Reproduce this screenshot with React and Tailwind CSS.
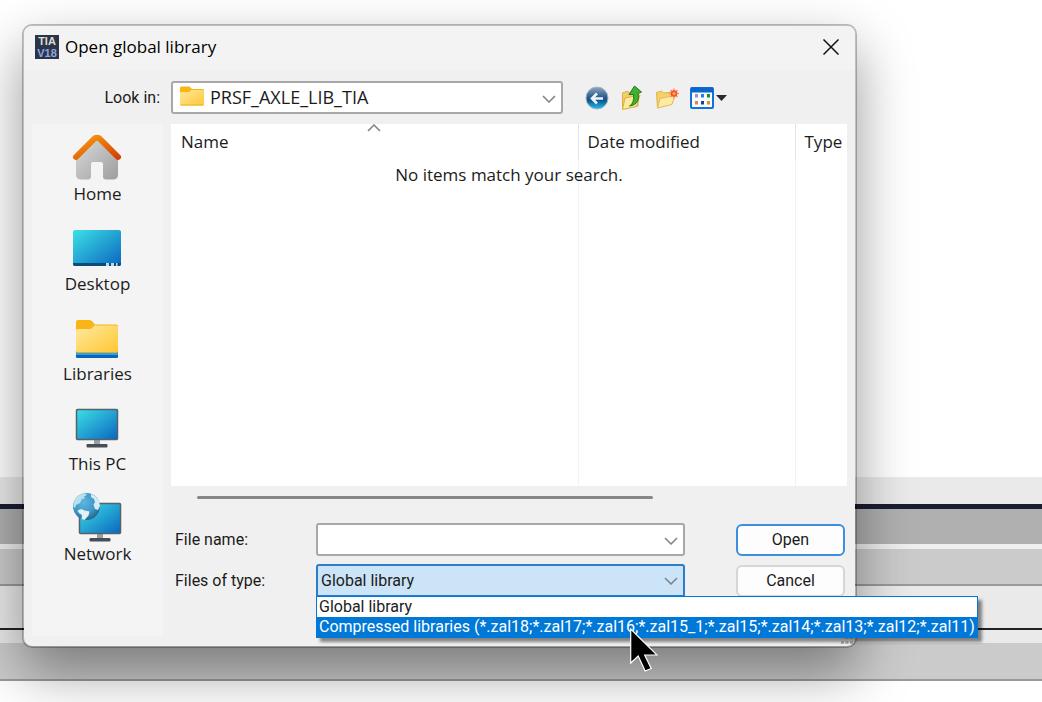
import { useState } from 'react';

const FILE_TYPES = [
    'Global library',
    'Compressed libraries (*.zal18;*.zal17;*.zal16;*.zal15_1;*.zal15;*.zal14;*.zal13;*.zal12;*.zal11)',
];

function Chevron({ className }) {
    return (
        <svg viewBox="0 0 14 8" fill="none" stroke="#808080" strokeWidth="1.500" className={className} aria-hidden="true">
            <path d="M1 1l6 6 6-6" />
        </svg>
    );
}

function FolderIcon({ className }) {
    return (
        <svg viewBox="0 0 24 20" className={className} aria-hidden="true">
            <defs>
                <linearGradient id="folder" x1="0" y1="0" x2="1" y2="1">
                    <stop offset="0" stopColor="#ffe79c" />
                    <stop offset="1" stopColor="#ffc937" />
                </linearGradient>
            </defs>
            <path d="M0 2a1.500 1.500 0 0 1 1.500-1.500H9.500L12 3h10.500A1.500 1.500 0 0 1 24 4.500V12H0z" fill="#f8b514" />
            <path d="M0 7.500A1.500 1.500 0 0 1 1.500 6H9l2.500-2h11A1.500 1.500 0 0 1 24 5.500V18a1.500 1.500 0 0 1-1.500 1.500h-21A1.500 1.500 0 0 1 0 18z" fill="url(#folder)" />
            <path d="M.5 19h23" stroke="#e9ae22" />
        </svg>
    );
}

function HomeIcon() {
    return (
        <svg viewBox="1 -2 50 48" className="h-12 w-[50px] overflow-visible" aria-hidden="true">
            <defs>
                <linearGradient id="wall" x1="0" y1="0" x2="1" y2="1">
                    <stop offset="0" stopColor="#dcdcdc" />
                    <stop offset="1" stopColor="#9d9d9d" />
                </linearGradient>
                <linearGradient id="roof" x1="0" y1="0" x2="1" y2="1">
                    <stop offset="0" stopColor="#fb9d0e" />
                    <stop offset="1" stopColor="#d34204" />
                </linearGradient>
            </defs>
            <path d="M4 24L25 5l21 19v18a4.500 4.500 0 0 1-4.500 4.500H34a3 3 0 0 1-3-3V31a2 2 0 0 0-2-2h-8a2 2 0 0 0-2 2v12.500a3 3 0 0 1-3 3H8.500A4.500 4.500 0 0 1 4 42z" fill="url(#wall)" />
            <path d="M4 24L22 6a4 4 0 0 1 6 0l18 18" fill="none" stroke="url(#roof)" strokeWidth="6" strokeLinecap="round" strokeLinejoin="round" />
        </svg>
    );
}

function ScreenGradient({ id }) {
    return (
        <defs>
            <linearGradient id={id} x1="0" y1="0" x2="1" y2="1">
                <stop offset="0" stopColor="#3ce0e6" />
                <stop offset="0.500" stopColor="#23a3d3" />
                <stop offset="1" stopColor="#0a66bf" />
            </linearGradient>
        </defs>
    );
}

function DesktopIcon() {
    return (
        <svg viewBox="1 0 50 48" className="h-12 w-[50px] overflow-visible" aria-hidden="true">
            <ScreenGradient id="desktop" />
            <rect x="1" y="9" width="48" height="36" rx="2" fill="url(#desktop)" />
            <path d="M1 42h48v1a2 2 0 0 1-2 2H3a2 2 0 0 1-2-2z" fill="#0b4b74" />
            <path d="M34 42h3v3h-3zM39 42h3v3h-3zM44 42h1.500v3H44z" fill="#b9dcf2" />
        </svg>
    );
}

function LibrariesIcon() {
    return (
        <svg viewBox="1 -3 50 48" className="h-12 w-[50px] overflow-visible" aria-hidden="true">
            <defs>
                <linearGradient id="library" x1="0" y1="0" x2="1" y2="1">
                    <stop offset="0" stopColor="#ffe9a2" />
                    <stop offset="1" stopColor="#ffc62e" />
                </linearGradient>
            </defs>
            <path d="M4 8a2 2 0 0 1 2-2h11.500c1 0 2 .5 3 1.500L23 10.500h21a2 2 0 0 1 2 2V26H4z" fill="#f9b517" />
            <rect x="4" y="36" width="42" height="8" rx="1" fill="#0b63bd" />
            <path d="M4 38.500h42v2.500H4z" fill="#26a5e6" />
            <path d="M4 17a2 2 0 0 1 2-2h11c1.500 0 2.500-.5 3.500-1.500l2-2H44a2 2 0 0 1 2 2V37a2 2 0 0 1-2 2H6a2 2 0 0 1-2-2z" fill="url(#library)" />
            <path d="M5 38.500h40" stroke="#e8ab28" />
        </svg>
    );
}

function Monitor({ fill }) {
    return (
        <>
            <rect x="22" y="35" width="6" height="6" fill="#9a9fa5" />
            <rect x="14.500" y="40" width="21" height="3.500" rx="1" fill="#474d54" />
            <rect x="4.500" y="5.500" width="41" height="30" rx="1" fill={fill} stroke="#53626b" strokeWidth="1.500" />
        </>
    );
}

function ThisPcIcon() {
    return (
        <svg viewBox="1 -3 50 48" className="h-12 w-[50px] overflow-visible" aria-hidden="true">
            <ScreenGradient id="pc" />
            <Monitor fill="url(#pc)" />
        </svg>
    );
}

function NetworkIcon() {
    return (
        <svg viewBox="1 -2 50 48" className="h-12 w-[50px] overflow-visible" aria-hidden="true">
            <ScreenGradient id="net" />
            <defs>
                <radialGradient id="globe" cx="0.400" cy="0.350" r="0.650">
                    <stop offset="0" stopColor="#5fb6e2" />
                    <stop offset="0.650" stopColor="#3f96c4" />
                    <stop offset="1" stopColor="#2a6a90" />
                </radialGradient>
            </defs>
            <g transform="translate(3 5)">
                <Monitor fill="url(#net)" />
            </g>
            <circle cx="14.500" cy="13.500" r="13.500" fill="url(#globe)" />
            <path d="M1.500 10C3 5 7 1 13 .3l2 1.500-3 1.700 1 2-3 .5-2 4-4 2-1 3-1.500-1z" fill="#b9e0ee" />
            <path d="M19 1l4 2 4 5 1 5-2 4-3-1-1.500-4.500L23 9l-1-3-3-2z" fill="#d5ecf3" />
            <path d="M5.500 17.500l4-1.500 3 1.500 5 1-1 4-4 4.500-3-1 .5-4-3-2z" fill="#e2f1f5" />
        </svg>
    );
}

function BackIcon() {
    return (
        <svg viewBox="0 0 24 24" className="size-6" aria-hidden="true">
            <defs>
                <linearGradient id="back" x1="0" y1="0" x2="0" y2="1">
                    <stop offset="0" stopColor="#93a7bf" />
                    <stop offset="0.400" stopColor="#356592" />
                    <stop offset="0.600" stopColor="#0c5387" />
                    <stop offset="1" stopColor="#20c0f5" />
                </linearGradient>
            </defs>
            <circle cx="12" cy="12" r="11" fill="url(#back)" stroke="#a3b3c2" />
            <path d="M18 12.500H7m5-5l-5 5 5 5" fill="none" stroke="#eef3f7" strokeWidth="2.600" />
        </svg>
    );
}

function UpIcon() {
    return (
        <svg viewBox="0 0 24 26" className="h-[26px] w-6" aria-hidden="true">
            <path d="M2.500 8l5-2 1.500 2 9-1v14L2.500 24z" fill="#f0cd66" stroke="#dcb043" />
            <path d="M2.500 24.500L5 13l15-3-3.500 11.500z" fill="#fdea9d" stroke="#dcb043" />
            <path d="M9.500 21c3.500-2 4.500-6 4-11.500H9L14.500 1 21.500 7l-3.500 1.500c1.500 6-.5 11.500-8.500 12.500z" fill="#3fb02f" stroke="#1d7b1b" strokeLinejoin="round" />
        </svg>
    );
}

function NewFolderIcon() {
    return (
        <svg viewBox="0 0 24 24" className="size-6" aria-hidden="true">
            <path d="M1.500 6.500l5-1.500 2 2 9-1v11L2.500 22z" fill="#f3d06c" stroke="#dfb54b" />
            <path d="M2.500 22l2.500-9.500 15-3-3 9z" fill="#fdeba2" stroke="#e3bd59" />
            <g stroke="#f79065" strokeWidth="1.500">
                <path d="M19 2.500v10M14 7.500h10M15.500 4l7 7M22.500 4l-7 7" />
            </g>
            <circle cx="19" cy="7.500" r="3.200" fill="#f9502a" />
            <circle cx="19" cy="7.500" r="1.500" fill="#ffb04f" />
        </svg>
    );
}

function ViewIcon() {
    return (
        <svg viewBox="0 0 38 24" className="h-6 w-[38px]" aria-hidden="true">
            <rect x="1" y="2" width="22" height="20" rx="1" fill="#f7fbff" stroke="#1171d6" strokeWidth="2" />
            <path d="M1 1.500h22v5H1z" fill="#0a66cf" />
            <path d="M5 8h3v3.500H5z" fill="#9b93c4" />
            <path d="M11 8h3v3.500h-3z" fill="#1f86e2" />
            <path d="M17 8h3v3.500h-3z" fill="#19922d" />
            <path d="M5 15h3v3.500H5z" fill="#ef7a51" />
            <path d="M11 15h3v3.500h-3z" fill="#173f9c" />
            <path d="M17 15h3v3.500h-3z" fill="#c7982a" />
            <path d="M26 9h11l-5.500 6z" fill="#2b2b2b" />
        </svg>
    );
}

const PLACES = [
    { name: 'Home', Icon: HomeIcon },
    { name: 'Desktop', Icon: DesktopIcon },
    { name: 'Libraries', Icon: LibrariesIcon },
    { name: 'This PC', Icon: ThisPcIcon },
    { name: 'Network', Icon: NetworkIcon },
];

// Window behind the dialog, only its lower bars are visible
function Backdrop() {
    return (
        <div className="col-start-1 row-start-1 flex flex-col bg-white pt-[477px]" aria-hidden="true">
            <div className="h-[27px] bg-[#eaeaea]" />
            <div className="h-[5px] bg-[#1a1e33]" />
            <div className="h-[35px] bg-[#b0b0b0]" />
            <div className="h-[5px] bg-[#efefef]" />
            <div className="h-[37px] border-b-2 border-[#999] bg-[#cbcbcb]" />
            <div className="h-[44px] border-b-2 border-[#222] bg-[#eaeaea]" />
            <div className="h-[13px] bg-[#eaeaea]" />
            <div className="h-[38px] border-b-2 border-[#999] bg-[#cbcbcb]" />
        </div>
    );
}

function TitleBar() {
    return (
        <header className="flex h-11 items-center gap-[6px] rounded-t-lg bg-[#f3f3f3] pr-3 pb-[2px] pl-[11px]">
            <span className="flex size-6 flex-col items-center justify-center overflow-hidden bg-[#2c3547] font-['Liberation_Sans'] text-[11px] leading-3 font-bold">
                <span className="text-[#dcdcdc]">TIA</span>
                <span className="text-[#8ea6e0]">V18</span>
            </span>
            <h1 className="flex-1 text-[17px] leading-6 text-black">Open global library</h1>
            <button type="button" aria-label="Close" className="flex size-6 items-center justify-center">
                <svg viewBox="0 0 16 16" className="size-4" stroke="#111" strokeWidth="1.500" aria-hidden="true">
                    <path d="M.5.5l15 15M15.500.5l-15 15" />
                </svg>
            </button>
        </header>
    );
}

function Toolbar() {
    return (
        <div className="flex items-center gap-2">
            <label htmlFor="look-in" className="w-[131px] pr-[3px] text-right font-['Roboto',sans-serif] text-[16px]">Look in:</label>
            <div className="relative w-[392px]">
                <FolderIcon className="pointer-events-none absolute top-[5px] left-[9px] h-5 w-6" />
                <select id="look-in" className="h-[33px] w-full appearance-none rounded-[3px] border-2 border-[#a8a8a8] bg-white pb-[2px] pl-[37px] text-[18px] leading-6">
                    <option>PRSF_AXLE_LIB_TIA</option>
                </select>
                <Chevron className="pointer-events-none absolute top-[14px] right-[7px] h-2 w-[14px]" />
            </div>
            <div className="flex items-center gap-[11px] pl-[14px]">
                <button type="button" aria-label="Back"><BackIcon /></button>
                <button type="button" aria-label="Up one level"><UpIcon /></button>
                <button type="button" aria-label="Create new folder"><NewFolderIcon /></button>
                <button type="button" aria-label="View menu"><ViewIcon /></button>
            </div>
        </div>
    );
}

function Places() {
    return (
        <nav className="flex w-[131px] flex-col bg-[#f4f4f4] pt-[7px]">
            {PLACES.map(({ name, Icon }) => (
                <button key={name} type="button" className="flex h-[90px] flex-col items-center gap-[3px] leading-6">
                    <Icon />
                    {name}
                </button>
            ))}
        </nav>
    );
}

function FileList() {
    return (
        <div className="relative">
            <table className="w-full table-fixed border-collapse bg-white">
                <thead>
                    <tr className="h-9 text-left [&>th]:font-normal">
                        <th className="relative pl-[10px]">
                            Name
                            <Chevron className="absolute top-0 left-1/2 h-2 w-[14px] -translate-x-1/2 rotate-180" />
                        </th>
                        <th className="w-[217px] border-l border-[#e3e3e3] pl-[9px]">Date modified</th>
                        <th className="w-[52px] border-l border-[#e3e3e3] pl-[9px]">Type</th>
                    </tr>
                </thead>
                <tbody>
                    <tr className="h-[326px]">
                        <td />
                        <td className="border-l border-[#edf3fa]" />
                        <td className="border-l border-[#edf3fa]" />
                    </tr>
                </tbody>
            </table>
            <p className="absolute inset-x-0 top-[39px] text-center leading-6">No items match your search.</p>
        </div>
    );
}

function FileForm() {
    const [active, setActive] = useState(1);

    return (
        <form className="grid grid-cols-[141px_1fr_109px] items-center gap-y-2 pr-[2px] pl-[4px] font-['Roboto',sans-serif] text-[16px]">
            <label htmlFor="file-name">File name:</label>
            <div className="relative mr-[51px]">
                <input id="file-name" type="text" className="h-[33px] w-full rounded-[3px] border-2 border-[#a8a8a8] bg-white px-1" />
                <Chevron className="pointer-events-none absolute top-[14px] right-[7px] h-2 w-[14px]" />
            </div>
            <button type="button" className="h-8 rounded-md border-2 border-[#3a90dc] bg-[#fdfdfd]">Open</button>

            <label htmlFor="file-type">Files of type:</label>
            <div className="relative mr-[51px]">
                <select id="file-type" className="h-[33px] w-full appearance-none rounded-t-[3px] border-2 border-[#2b7dca] bg-[#cce4f7] pl-[3px]">
                    <option>Global library</option>
                </select>
                <Chevron className="pointer-events-none absolute top-[13px] right-[7px] h-2 w-[14px]" />
                <ul role="listbox" aria-label="Files of type" className="absolute top-8 left-0 z-10 w-max border border-[#0078d7] bg-white leading-5 shadow-[4px_4px_3px_rgba(0,0,0,0.45)]">
                    {FILE_TYPES.map((type, i) => (
                        <li
                            key={type}
                            role="option"
                            aria-selected={i === active}
                            onMouseEnter={() => setActive(i)}
                            className={i === active ? 'bg-[#0078d7] px-[2px] text-white' : 'px-[2px] text-[#1b1b1b]'}
                        >
                            {type}
                        </li>
                    ))}
                </ul>
                {/* Mouse pointer over the highlighted option */}
                <svg viewBox="0 0 28 46" className="pointer-events-none absolute top-16 left-[314px] z-20 h-[46px] w-7" aria-hidden="true">
                    <path d="M.7 1v34l7.500-7 7 15 6-2.500-6.500-13.500H27z" fill="#000" stroke="#fff" strokeWidth="1.200" />
                </svg>
            </div>
            <button type="button" className="h-8 rounded-md border-2 border-[#d6d6d6] bg-[#fdfdfd]">Cancel</button>
        </form>
    );
}

export default function App() {
    return (
        <main className="grid min-h-screen grid-cols-1 overflow-hidden font-['Open_Sans',sans-serif] text-[17px] text-[#1b1b1b]">
            <Backdrop />
            <section
                role="dialog"
                aria-label="Open global library"
                className="relative col-start-1 row-start-1 mt-6 mr-[185px] ml-[22px] flex flex-col self-start rounded-[10px] border-2 border-black/25 bg-[#f0f0f0] bg-clip-padding shadow-[0_24px_56px_rgba(0,0,0,0.4)]"
            >
                <TitleBar />
                <div className="flex flex-col gap-[10px] px-2 pt-[11px] pb-[10px]">
                    <Toolbar />
                    <div className="flex gap-2">
                        <Places />
                        <div className="flex h-[512px] min-w-0 flex-1 flex-col">
                            <FileList />
                            <div className="mt-[10px] mb-6 ml-[26px] h-[3px] w-[456px] rounded-full bg-[#868686]" />
                            <FileForm />
                        </div>
                    </div>
                </div>
                {/* Resize grip */}
                <svg viewBox="0 0 12 8" className="absolute right-[2px] bottom-[2px] h-2 w-3" fill="#b5b5b5" aria-hidden="true">
                    <path d="M0 5h3v3H0zM4.500 5h3v3h-3zM9 5h3v3H9zM4.500 0h3v3h-3zM9 0h3v3H9z" />
                </svg>
            </section>
        </main>
    );
}
